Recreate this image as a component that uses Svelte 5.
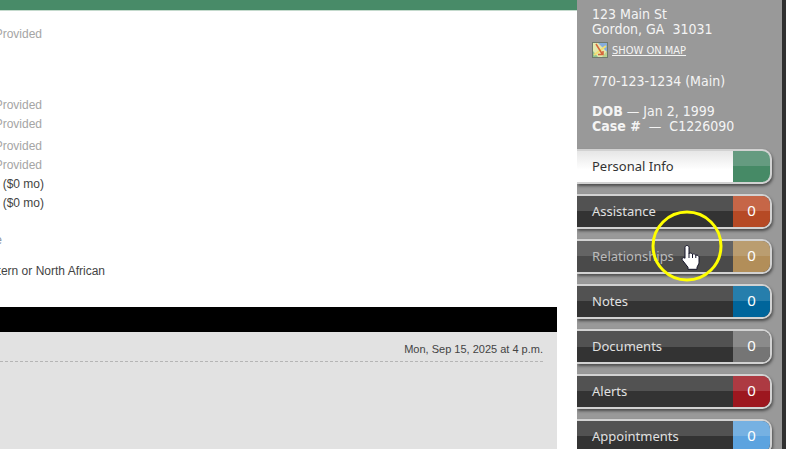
<script>
    const groups = [
        {name: "contact", values: ["Provided"]},
        {name: "address", values: ["Provided", "Provided"]},
        {name: "work", values: ["Provided", "Provided"]},
        {name: "income", values: ["($0 mo)", "($0 mo)"]},
        {name: "language", values: ["e"]},
        {name: "ethnicity", values: ["tern or North African"]},
    ];

    const tabs = [
        {label: "Personal Info", color: "green", active: true},
        {label: "Assistance", color: "orange", count: 0},
        {label: "Relationships", color: "tan", count: 0, hovered: true},
        {label: "Notes", color: "blue", count: 0},
        {label: "Documents", color: "gray", count: 0},
        {label: "Alerts", color: "red", count: 0},
        {label: "Appointments", color: "sky", count: 0},
    ];
</script>

<div class="page">
  <main>
    <div class="topbar"></div>
    <div class="details">
      {#each groups as group}
        <ul class={group.name}>
          {#each group.values as value}
            <li>{value}</li>
          {/each}
        </ul>
      {/each}
    </div>
    <section class="log">
      <div class="log-title"></div>
      <div class="log-body">
        <time datetime="2025-09-15T16:00">Mon, Sep 15, 2025 at 4 p.m.</time>
      </div>
    </section>
  </main>

  <aside>
    <div class="client">
      <p>123 Main St<br />Gordon, GA&nbsp; 31031</p>
      <a class="map-link" href="#map">
        <svg width="16" height="16" viewBox="0 0 16 16" aria-hidden="true">
          <rect width="16" height="16" fill="#6f7a6c" />
          <rect x="1" y="1" width="14" height="14" fill="#e3e8ae" />
          <path d="M6 1h9v9z" fill="#86addd" />
          <path d="M1 9l5 6H1z" fill="#8fc391" />
          <path d="M15 9v6H10z" fill="#b9d391" />
          <path d="M2 13L14 4" stroke="#f2df72" stroke-width="2" />
          <path d="M4 2l6.500 10.500M6 12.500h5V9" stroke="#d5663b" stroke-width="1.500" fill="none" />
        </svg>
        <span>SHOW ON MAP</span>
      </a>
      <p class="phone">770-123-1234 (Main)</p>
      <p><b>DOB</b> — Jan 2, 1999<br /><b>Case #</b>&nbsp; —&nbsp; C1226090</p>
    </div>

    <nav>
      {#each tabs as tab}
        <button class="tab" class:active={tab.active} class:hovered={tab.hovered}>
          <span class="label">{tab.label}</span>
          <span class="count {tab.color}">{tab.count ?? ""}</span>
        </button>
      {/each}
    </nav>

    <svg class="pointer" width="72" height="72" viewBox="0 0 72 72" aria-hidden="true">
      <circle cx="36" cy="36" r="34" fill="none" stroke="#ffff00" stroke-width="3" />
      <path
        d="M36 35.500c1.200 0 2 .9 2 2v6c.4-.6 3-.8 3.500.8.700-.8 3-.5 3.300 1 1.500-.6 3.200.2 3.200 2v5c0 2-1.500 3.500-2 5v2H37v-2l-5.500-7c-1.300-1.800.8-3.600 2.500-2V37.500c0-1.100.8-2 2-2z"
        fill="#fff" stroke="#15152a" stroke-width="1" />
      <path d="M38 43v5M41.500 44v4M44.800 45v3" stroke="#15152a" stroke-width="1" />
    </svg>
  </aside>
</div>

<style>
    :global(body) {
        margin: 0;
        overflow: hidden;
    }

    .page {
        display: grid;
        grid-template-columns: minmax(0, 1fr) 209px;
        min-height: 100vh;
        background-color: #fff;
        font-family: 'Liberation Sans', Arial, sans-serif;
        font-size: 12px;
    }

    main {
        display: flex;
        flex-direction: column;
        overflow: hidden;
    }

    .topbar {
        height: 10px;
        background-color: #488b68;
        border-bottom: 1px solid #c4dacd;
    }

    .details {
        padding: 14px 0 26px;
        line-height: 19px;
        color: #444;
    }

    ul {
        display: flex;
        flex-direction: column;
        align-items: flex-end;
        list-style: none;
        width: 42px;
        margin: 0;
        padding: 0;
        white-space: nowrap;
    }

    .contact, .address, .work {
        color: #a5a5a5;
    }

    .address {
        margin-top: 52px;
    }

    .work {
        margin-top: 3px;
    }

    .income {
        width: 44px;
    }

    .language {
        width: 2px;
        margin-top: 18px;
        color: #8d96a5;
    }

    .ethnicity {
        width: 105px;
        margin-top: 12px;
    }

    .log {
        flex: 1;
        margin-right: 20px;
        background-color: #e2e2e2;
    }

    .log-title {
        height: 25px;
        background-color: #000;
    }

    .log-body {
        padding: 8px 14px 0 0;
    }

    time {
        display: block;
        padding-bottom: 2px;
        border-bottom: 1px dashed #b5b5b5;
        font-size: 11px;
        line-height: 19px;
        text-align: right;
        color: #444;
    }

    aside {
        position: relative;
        box-sizing: border-box;
        height: 100vh;
        overflow: hidden;
        border-right: 4px solid #303030;
        background-color: #999;
    }

    .client {
        padding: 7px 0 0 15px;
        font-family: Tahoma, 'DejaVu Sans Condensed', 'DejaVu Sans', sans-serif;
        font-size: 14px;
        line-height: 15px;
        color: #f4f4f4;
    }

    p {
        margin: 0;
    }

    .map-link {
        display: flex;
        align-items: center;
        gap: 4px;
        margin-top: 5px;
        font-size: 11px;
        color: #f4f4f4;
    }

    .phone {
        margin: 16px 0 15px;
    }

    nav {
        display: flex;
        flex-direction: column;
        gap: 10px;
        margin-top: 15px;
        padding-right: 10px;
    }

    .tab {
        display: flex;
        align-items: stretch;
        box-sizing: border-box;
        height: 35px;
        padding: 0;
        overflow: hidden;
        border: 2px solid #d2d2d2;
        border-left: none;
        border-radius: 0 10px 10px 0;
        background: linear-gradient(#525252 50%, #333 50%);
        box-shadow: 1px 2px 3px rgba(0, 0, 0, 0.5);
        font-family: 'Noto Sans', sans-serif;
        font-size: 13px;
        line-height: 31px;
        color: #e0e0e0;
    }

    .tab.active {
        background: linear-gradient(#e6e6e6, #fff 60%);
        color: #333;
    }

    .tab.hovered {
        background: linear-gradient(#646464 50%, #4a4a4a 50%);
        color: #bbb;
    }

    .label {
        flex: 1;
        padding-left: 15px;
        text-align: left;
    }

    .count {
        width: 37px;
        font-size: 15px;
        line-height: 29px;
        text-align: center;
        color: #fff;
    }

    .green {
        background: linear-gradient(#659b80 50%, #468a66 50%);
    }

    .orange {
        background: linear-gradient(#c66647 50%, #b64a25 50%);
    }

    .tan {
        background: linear-gradient(#ba9d70 50%, #b28e59 50%);
    }

    .blue {
        background: linear-gradient(#267eac 50%, #00659b 50%);
    }

    .gray {
        background: linear-gradient(#8b8b8b 50%, #757575 50%);
    }

    .red {
        background: linear-gradient(#ad3a42 50%, #9d171f 50%);
    }

    .sky {
        background: linear-gradient(#76b1e2 50%, #5ca3df 50%);
    }

    .pointer {
        position: absolute;
        top: 210px;
        left: 74px;
        pointer-events: none;
    }
</style>
